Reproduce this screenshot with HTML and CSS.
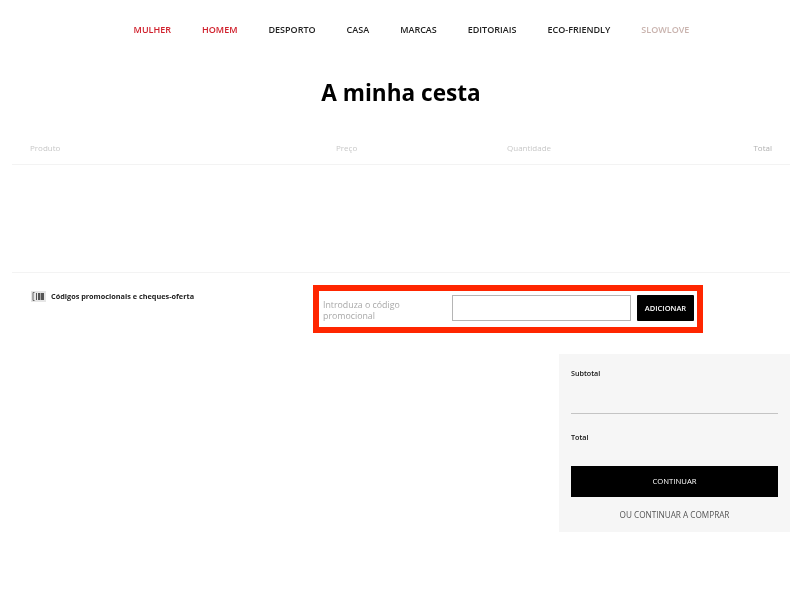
FILE: index.html
```html
<!DOCTYPE html>
<html lang="pt">
<head>
    <meta charset="UTF-8">
    <meta name="viewport" content="width=device-width, initial-scale=1.0">
    <title>A minha cesta</title>
    <link rel="stylesheet" href="styles.css">
</head>
<body>

    <div class="page">

        <!-- menu -->
        <nav class="main-nav">
            <a class="nav-red" href="#">MULHER</a>
            <a class="nav-red" href="#">HOMEM</a>
            <a href="#">DESPORTO</a>
            <a href="#">CASA</a>
            <a href="#">MARCAS</a>
            <a href="#">EDITORIAIS</a>
            <a href="#">ECO-FRIENDLY</a>
            <a class="nav-soft" href="#">SLOWLOVE</a>
        </nav>

        <h1 class="page-title">A minha cesta</h1>

        <!-- tabela -->
        <div class="cart-head">
            <div class="col-product">Produto</div>
            <div class="col-price">Preço</div>
            <div class="col-qty">Quantidade</div>
            <div class="col-total">Total</div>
        </div>
        <div class="cart-body"></div>

        <!-- codigo promocional -->
        <div class="promo-row">
            <div class="promo-title">
                <svg class="barcode" width="15" height="11" viewBox="0 0 15 11" aria-hidden="true">
                    <rect width="15" height="11" fill="#e6e6e6"/>
                    <path d="M3.5 1.5H2v8h1.5" stroke="#666" fill="none"/>
                    <path d="M5.5 2v7" stroke="#555" fill="none"/>
                    <rect x="7" y="2" width="6" height="7" fill="#555"/>
                    <path d="M9.5 2v7" stroke="#aaa" fill="none"/>
                </svg>
                <span>Códigos promocionais e cheques-oferta</span>
            </div>
            <div class="promo-box">
                <label class="promo-label" for="promoCode">Introduza o código promocional</label>
                <input class="promo-input" id="promoCode" type="text">
                <button class="promo-button" type="button">ADICIONAR</button>
            </div>
        </div>

        <!-- resumo -->
        <div class="summary-wrap">
            <aside class="summary">
                <div class="summary-label summary-subtotal">Subtotal</div>
                <div class="summary-label summary-total">Total</div>
                <button class="continue-button" type="button">CONTINUAR</button>
                <a class="keep-shopping" href="#">OU CONTINUAR A COMPRAR</a>
            </aside>
        </div>

    </div>

</body>
</html>
```

FILE: styles.css
```css
body {
    font-family: "Open Sans", "Liberation Sans", sans-serif;
    margin: 0;
    padding: 0;
    background-color: #ffffff;
    color: #000000;
}

/* the reference is a soft, scaled-up capture */
.page {
    padding: 0 10px 68px 12px;
    background-color: #ffffff;
    filter: blur(0.5px);
}

/* menu */
.main-nav {
    display: flex;
    justify-content: center;
    gap: 31px;
    padding: 24px 0 0 21px;
    height: 37px;
    font-size: 9px;
    line-height: 12px;
    font-weight: 600;
}

.main-nav a {
    color: #222222;
    text-decoration: none;
}

.main-nav a.nav-red {
    color: #d0202c;
}

.main-nav a.nav-soft {
    color: #c9b3ae;
}

.page-title {
    margin: 0;
    height: 72px;
    padding-top: 17px;
    box-sizing: border-box;
    text-align: center;
    font-size: 22.6px;
    line-height: 30px;
    font-weight: 700;
}

/* tabela */
.cart-head {
    display: flex;
    height: 32px;
    padding: 9px 18px 0;
    box-sizing: border-box;
    border-bottom: 1px solid #f3f3f3;
    font-size: 8px;
    line-height: 12px;
    color: #c8c8c8;
}

.col-product {
    width: 306px;
}

.col-price {
    width: 171px;
}

.col-qty {
    flex: 1;
}

.col-total {
    color: #b0b0b0;
}

.cart-body {
    height: 107px;
    border-bottom: 1px solid #f3f3f3;
}

/* codigo promocional */
.promo-row {
    display: flex;
    align-items: flex-start;
    padding-top: 12px;
}

.promo-title {
    display: flex;
    align-items: center;
    gap: 5px;
    width: 283px;
    padding: 5px 0 0 19px;
    margin-right: -1px;
    font-size: 7.3px;
    line-height: 12px;
    font-weight: 700;
    color: #222222;
}

.barcode {
    flex: none;
}

.promo-box {
    display: flex;
    align-items: flex-start;
    width: 390px;
    height: 48px;
    padding: 4px 0 0 4px;
    box-sizing: border-box;
    border: 6px solid #ff2600;
}

.promo-label {
    width: 129px;
    padding: 5px 30px 0 0;
    box-sizing: border-box;
    font-size: 8.8px;
    line-height: 11px;
    color: #a8a8a8;
}

.promo-input {
    width: 179px;
    height: 26px;
    padding: 0;
    box-sizing: border-box;
    border: 1px solid #b5b5b5;
    background-color: #ffffff;
}

.promo-button {
    width: 57px;
    height: 26px;
    margin-left: 6px;
    padding: 0;
    border: 0;
    border-radius: 1px;
    background-color: #000000;
    color: #ffffff;
    font-family: inherit;
    font-size: 7.5px;
    font-weight: 600;
}

/* resumo */
.summary-wrap {
    display: flex;
    justify-content: flex-end;
    padding-top: 21px;
}

.summary {
    width: 231px;
    height: 178px;
    padding: 13px 12px 0;
    box-sizing: border-box;
    background-color: #f6f6f6;
}

.summary-label {
    font-size: 7.2px;
    line-height: 12px;
    font-weight: 600;
    color: #111111;
}

.summary-subtotal {
    height: 46px;
    border-bottom: 1px solid #c4c4c4;
}

.summary-total {
    margin-top: 17px;
}

.continue-button {
    display: block;
    width: 100%;
    height: 31px;
    margin-top: 23px;
    padding: 0 0 2px;
    border: 0;
    background-color: #000000;
    color: #ffffff;
    font-family: inherit;
    font-size: 7.7px;
}

.keep-shopping {
    display: block;
    margin-top: 12px;
    text-align: center;
    font-size: 8.2px;
    line-height: 12px;
    color: #555555;
    text-decoration: none;
}
```
